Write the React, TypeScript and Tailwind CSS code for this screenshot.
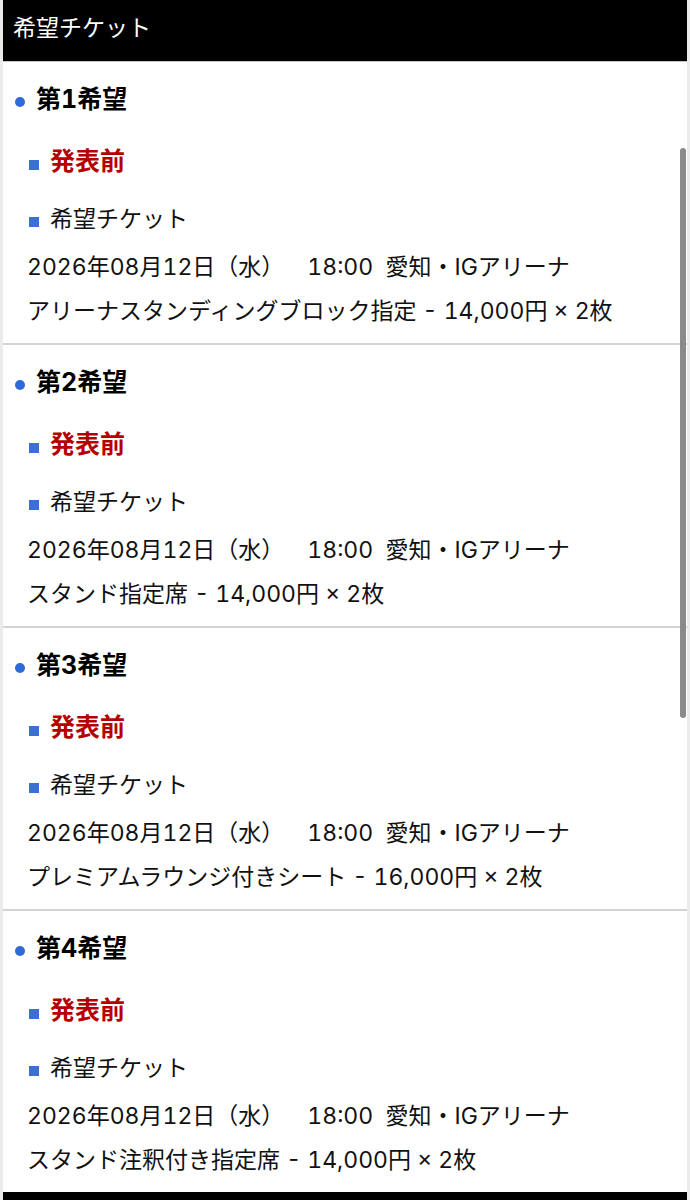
import React from "react";

type Wish = {
  rank: number;
  date: string;
  seat: string;
};

const wishes: Wish[] = [
  { rank: 1, date: "2026年08月12日（水）", seat: "アリーナスタンディングブロック指定 - 14,000円 × 2枚" },
  { rank: 2, date: "2026年08月12日（水）", seat: "スタンド指定席 - 14,000円 × 2枚" },
  { rank: 3, date: "2026年08月12日（水）", seat: "プレミアムラウンジ付きシート - 16,000円 × 2枚" },
  { rank: 4, date: "2026年08月12日（水）", seat: "スタンド注釈付き指定席 - 14,000円 × 2枚" },
];

const font = { fontFamily: 'Inter, "Noto Sans CJK JP", sans-serif' };

function Square() {
  return <span className="block h-[10px] w-[10px] shrink-0 translate-y-[3px] bg-[#3a6fd6]" />;
}

function WishBlock({ wish, last }: { wish: Wish; last: boolean }) {
  return (
    <section
      className={
        "pt-4 pb-[10px] text-[23px] text-[#111] " +
        (last ? "" : "border-b-2 border-[#d4d4d4]")
      }
    >
      <h3 className="flex h-[44px] items-center gap-[11px] pl-[12px] text-[25px] font-bold text-black">
        <span className="block h-[10px] w-[10px] shrink-0 translate-y-[2px] rounded-full bg-[#2f6ad6]" />
        第{wish.rank}希望
      </h3>
      <div className="mt-[18px] flex h-[44px] items-center gap-[11px] pl-[26px] text-[25px] font-bold text-[#b40000]">
        <Square />
        発表前
      </div>
      <div className="mt-[13px] flex h-[44px] items-center gap-[11px] pl-[26px]">
        <Square />
        希望チケット
      </div>
      <p className="mt-[4px] flex h-[44px] items-center whitespace-pre pl-[24px]">
        {wish.date}{"　18:00  愛知・IGアリーナ"}
      </p>
      <p className="flex h-[44px] items-center whitespace-pre pl-[24px]">{wish.seat}</p>
    </section>
  );
}

export default function App() {
  return (
    <div
      className="relative h-[1200px] overflow-hidden bg-[#ebebeb] px-[3px] tabular-nums [text-spacing-trim:space-all]"
      style={font}
    >
      <header className="flex h-[62px] items-center border-b border-[#c4c4c4] bg-black pl-[10px] pb-[4px] text-[23px] text-white">
        希望チケット
      </header>
      <div className="bg-white">
        {wishes.map((w, i) => (
          <WishBlock key={w.rank} wish={w} last={i === wishes.length - 1} />
        ))}
      </div>
      <div className="h-[20px] bg-black" />
      <div className="absolute left-[680px] top-[148px] h-[570px] w-[6px] rounded-full bg-[#8a8a8a]" />
    </div>
  );
}
